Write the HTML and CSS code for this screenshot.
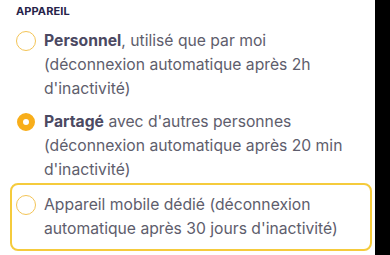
FILE: index.html
```html
<!DOCTYPE html>
<html lang="fr">
<head>
    <meta charset="UTF-8">
    <meta name="viewport" content="width=device-width, initial-scale=1.0">
    <title>Appareil</title>
    <link rel="stylesheet" href="styles.css">
</head>
<body>
    <div class="page">
        <h4 class="section-label">APPAREIL</h4>

        <div class="options">
            <label class="option">
                <span class="radio"></span>
                <span class="option-text"><strong>Personnel</strong>, utilisé que par moi <span class="hint">(déconnexion automatique après 2h d'inactivité)</span></span>
            </label>

            <label class="option">
                <span class="radio checked"></span>
                <span class="option-text"><strong>Partagé</strong> avec d'autres personnes <span class="hint">(déconnexion automatique après 20 min d'inactivité)</span></span>
            </label>

            <label class="option focused">
                <span class="radio"></span>
                <span class="option-text">Appareil mobile dédié (déconnexion automatique après 30 jours d'inactivité)</span>
            </label>
        </div>
    </div>
</body>
</html>
```

FILE: styles.css
```css
* {
    margin: 0;
    padding: 0;
    box-sizing: border-box;
}

body {
    background: #000;
    font-family: 'Inter', 'Roboto', sans-serif;
}

.page {
    width: 375px;
    height: 255px;
    background: #fff;
    padding-top: 4px;
}

.section-label {
    margin: 0 16px 11px;
    font-size: 11px;
    line-height: 14px;
    font-weight: 700;
    color: #26234a;
    letter-spacing: 0.1px;
}

.options {
    display: flex;
    flex-direction: column;
    gap: 9px;
}

.option {
    display: flex;
    align-items: flex-start;
    gap: 8px;
    padding: 0 16px;
    font-size: 15.7px;
    line-height: 24px;
    color: #5e5d6c;
}

.option strong {
    font-weight: 700;
    color: #4b4962;
}

.hint {
    display: block;
}

.option.focused {
    margin: -8px 3px 0 10px;
    padding: 8px 8px 8px 4px;
    border: 2px solid #f5cb3c;
    border-radius: 8px;
}

.radio {
    flex: none;
    width: 20px;
    height: 20px;
    margin-top: 2px;
    border: 1.5px solid #f3c456;
    border-radius: 50%;
}

.radio.checked {
    width: 18px;
    height: 18px;
    margin: 3px 1px 0;
    border: 6px solid #f8ae1a;
}
```
